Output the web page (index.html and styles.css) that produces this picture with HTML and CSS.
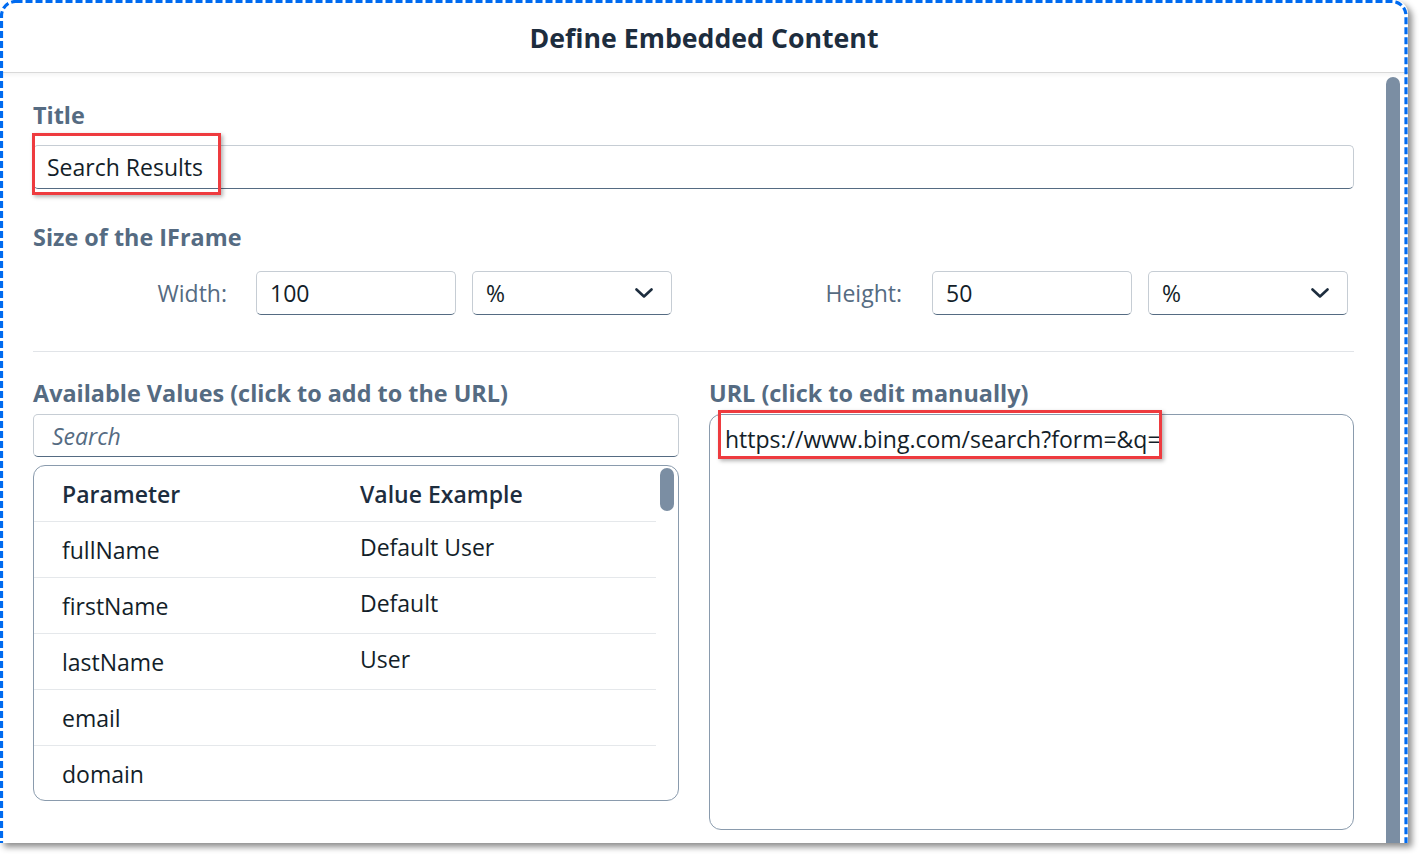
FILE: index.html
```html
<!DOCTYPE html>
<html>
<head>
<meta charset="utf-8">
<title>Define Embedded Content</title>
<link rel="stylesheet" href="styles.css">
</head>
<body>
<div class="dialog">
  <header class="dlg-header"><h1>Define Embedded Content</h1></header>
  <div class="dlg-body">
    <div class="content">
      <div class="label first">Title</div>
      <div class="field">
        <div class="input title-input">Search Results</div>
        <div class="annot annot-title"></div>
      </div>
      <div class="label section">Size of the IFrame</div>
      <div class="size-row">
        <span class="size-label w1">Width:</span>
        <div class="input small">100</div>
        <div class="input select"><span>%</span><svg class="chev" width="18" height="10" viewBox="0 0 18 10"><path d="M1.5 1.5 L9 8.5 L16.5 1.5" fill="none" stroke="#1d2d3e" stroke-width="2.6" stroke-linecap="round" stroke-linejoin="round"/></svg></div>
        <span class="size-label w2">Height:</span>
        <div class="input small">50</div>
        <div class="input select"><span>%</span><svg class="chev" width="18" height="10" viewBox="0 0 18 10"><path d="M1.5 1.5 L9 8.5 L16.5 1.5" fill="none" stroke="#1d2d3e" stroke-width="2.6" stroke-linecap="round" stroke-linejoin="round"/></svg></div>
      </div>
      <div class="divider"></div>
      <div class="columns">
        <div class="col">
          <div class="label">Available Values (click to add to the URL)</div>
          <div class="input search">Search</div>
          <div class="table">
            <div class="rows">
              <div class="row head"><span class="c1">Parameter</span><span class="c2">Value Example</span></div>
              <div class="row"><span class="c1">fullName</span><span class="c2">Default User</span></div>
              <div class="row"><span class="c1">firstName</span><span class="c2">Default</span></div>
              <div class="row"><span class="c1">lastName</span><span class="c2">User</span></div>
              <div class="row"><span class="c1">email</span><span class="c2"></span></div>
              <div class="row last"><span class="c1">domain</span><span class="c2"></span></div>
            </div>
            <div class="tscroll"></div>
          </div>
        </div>
        <div class="col">
          <div class="label">URL (click to edit manually)</div>
          <div class="textarea">https://www.bing.com/search?form=&amp;q=<div class="annot annot-url"></div></div>
        </div>
      </div>
    </div>
    <div class="vscroll"></div>
  </div>
  <svg class="focus-ring" width="1408" height="900" viewBox="0 0 1408 900"><rect x="1.5" y="1.5" width="1404.5" height="890" rx="14" ry="14" fill="none" stroke="#006bf0" stroke-width="3.2" stroke-dasharray="7 3"/></svg>
</div>
</body>
</html>
```
FILE: styles.css
```css
* { box-sizing: border-box; }
html, body { margin: 0; padding: 0; background: #fff; }
body {
  font-family: "Open Sans", "Noto Sans", sans-serif;
  color: #131e29;
  width: 1426px;
  height: 858px;
  overflow: hidden;
}
.dialog {
  position: relative;
  width: 1408px;
  height: 843px;
  background: #fff;
  border-radius: 14px 14px 0 0;
  box-shadow: 4px 4px 6px rgba(0,0,0,0.45);
  overflow: hidden;
  display: flex;
  flex-direction: column;
}
.dlg-header {
  height: 73px;
  flex: none;
  display: flex;
  align-items: center;
  justify-content: center;
  border-bottom: 1px solid #d9d9d9;
  box-shadow: 0 2px 4px rgba(0,0,0,0.05);
}
.dlg-header h1 {
  margin: 0;
  font-size: 26.7px;
  font-weight: 700;
  color: #1d2d3e;
  line-height: 32px;
  padding-top: 3px;
}
.dlg-body {
  flex: 1;
  display: flex;
  min-height: 0;
}
.content {
  flex: 1;
  padding: 0 32px 0 33px;
}
.vscroll {
  width: 14px;
  flex: none;
  margin: 4px 8px 0 0;
  background: #7b8ea3;
  border-radius: 7px 7px 0 0;
}
.label {
  font-size: 23.4px;
  font-weight: 700;
  color: #556b82;
  line-height: 28px;
  height: 28px;
  white-space: nowrap;
}
.label.first { margin-top: 28px; }
.label.section { margin-top: 34px; }
.field { position: relative; margin-top: 16px; }
.input {
  height: 44px;
  border: 1px solid #c6cdd4;
  border-bottom: 1.5px solid #556b82;
  border-radius: 5px;
  font-size: 23px;
  line-height: 28px;
  padding: 7px 13px;
  color: #131e29;
  background: #fff;
  white-space: nowrap;
}
.title-input { padding-left: 13px; }
.annot {
  position: absolute;
  border: 3px solid #ee3b3f;
  box-shadow: 2px 2px 4px rgba(0,0,0,0.3);
  pointer-events: none;
}
.annot-title { left: -1px; top: -12px; width: 189px; height: 62px; }
.size-row {
  display: flex;
  align-items: center;
  margin-top: 20px;
  height: 44px;
}
.size-label {
  font-size: 23px;
  color: #556b82;
  text-align: right;
  line-height: 28px;
}
.w1 { width: 194px; margin-right: 29px; }
.w2 { width: 230px; margin-right: 30px; }
.small { width: 200px; }
.select {
  width: 200px;
  margin-left: 16px;
  display: flex;
  align-items: center;
  justify-content: space-between;
  padding-right: 18px;
}
.chev { display: block; }
.divider {
  height: 1px;
  background: #e1e4e8;
  margin-top: 36px;
}
.columns {
  display: flex;
  gap: 30px;
  margin-top: 27px;
}
.col { flex: 1; min-width: 0; }
.col:first-child { flex: 0 0 646px; }
.search {
  margin-top: 7px;
  height: 43px;
  font-style: italic;
  color: #556b82;
  padding-left: 18px;
}
.table {
  margin-top: 8px;
  height: 336px;
  border: 1px solid #8a9bad;
  border-radius: 12px;
  display: flex;
  overflow: hidden;
}
.rows { flex: 1; }
.row {
  height: 56px;
  display: flex;
  align-items: center;
  border-bottom: 1px solid #e5e8eb;
  font-size: 23px;
  line-height: 28px;
  color: #131e29;
}
.row.last { border-bottom: none; }
.row .c1 { width: 326px; padding-left: 28px; flex: none; }
.row .c2 { padding-bottom: 6px; }
.row.head { height: 56px; font-weight: 600; color: #1d2d3e; }
.row.head .c2 { padding-bottom: 0; }
.tscroll {
  width: 14px;
  height: 43px;
  flex: none;
  margin: 2px 4px 0 4px;
  border-radius: 7px;
  background: #7b8ea3;
}
.textarea {
  position: relative;
  margin-top: 7px;
  height: 416px;
  border: 1px solid #8a9bad;
  border-radius: 12px;
  font-size: 23px;
  line-height: 28px;
  padding: 10px 15px;
  color: #131e29;
  white-space: nowrap;
}
.annot-url { left: 8px; top: -5px; width: 444px; height: 49px; }
.focus-ring {
  position: absolute;
  left: 0;
  top: 0;
  pointer-events: none;
}
```
